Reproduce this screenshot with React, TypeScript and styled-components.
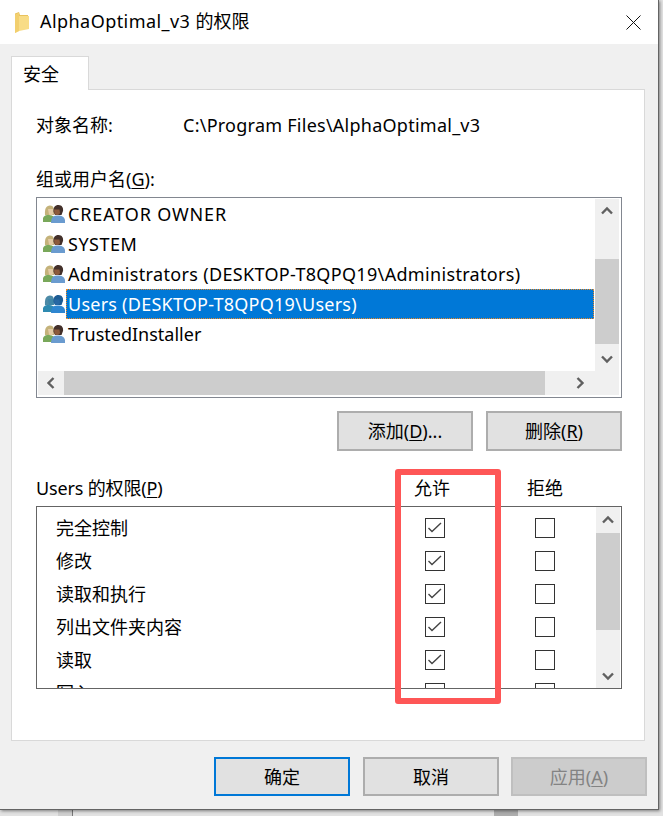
import { createGlobalStyle, styled } from "styled-components";

const GlobalStyle = createGlobalStyle`
  html, body {
    margin: 0;
    padding: 0;
  }
  body {
    font-family: "Noto Sans", "Noto Sans CJK SC", sans-serif;
    font-size: 18px;
    line-height: 24px;
    color: #000;
  }
`;

const Page = styled.div`
  position: relative;
  width: 663px;
  height: 816px;
  overflow: hidden;
  background: linear-gradient(
    90deg,
    #e2e2e2 0 58px,
    #cfcfcf 58px 72px,
    #777 72px 73px,
    #e2e2e2 73px 494px,
    #adadad 494px 518px,
    #e2e2e2 518px
  );
`;

const Window = styled.div`
  width: 659px;
  height: 810px;
  box-sizing: border-box;
  background: #f0f0f0;
  border-right: 1px solid #646464;
  border-bottom: 1px solid #646464;
  box-shadow: 1px 1px 3px rgba(0, 0, 0, 0.45);
`;

const TitleBar = styled.header`
  height: 44px;
  display: flex;
  align-items: center;
  padding: 0 17px 0 15px;
  background: #fff;
`;

const TitleText = styled.h1`
  flex: 1;
  margin: 0 0 2px 11px;
  font-size: 18px;
  font-weight: 400;
  line-height: 24px;
`;

const Latin = styled.span<{ $tracking: number }>`
  letter-spacing: ${(p) => p.$tracking}px;
`;

const TabStrip = styled.div`
  display: flex;
  margin: 12px 0 0 11px;
  height: 33px;
`;

const Tab = styled.div`
  width: 78px;
  box-sizing: border-box;
  height: 34px;
  padding: 5px 0 0 11px;
  background: #fff;
  border: 1px solid #d9d9d9;
  border-bottom: none;
  position: relative;
  z-index: 1;
`;

const Panel = styled.section`
  width: 634px;
  height: 652px;
  box-sizing: border-box;
  margin-left: 11px;
  padding: 23px 0 0 24px;
  background: #fff;
  border: 1px solid #d9d9d9;
`;

const ObjectRow = styled.div`
  display: grid;
  grid-template-columns: 147px 1fr;
  height: 24px;
`;

const SectionLabel = styled.div`
  height: 24px;
  margin-top: 30px;
`;

const Key = styled.span`
  text-decoration: underline;
  text-underline-offset: 2px;
`;

const ListBox = styled.div<{ $top: number }>`
  width: 586px;
  box-sizing: border-box;
  margin-top: ${(p) => p.$top}px;
  border: 1px solid #828790;
  background: #fff;
`;

const UserListBox = styled(ListBox)`
  height: 201px;
  padding: 1px 2px 2px 1px;
  display: grid;
  grid-template-columns: 557px 24px;
  grid-template-rows: 172px 24px;
`;

const UserRows = styled.ul`
  margin: 0;
  padding: 0;
  list-style: none;
`;

const UserRow = styled.li`
  height: 30px;
  display: flex;
  align-items: center;
  padding-left: 5px;
`;

const UserName = styled.span<{ $selected?: boolean; $tracking: number }>`
  flex: 1;
  height: 30px;
  box-sizing: border-box;
  margin: 0 1px 0 1px;
  padding: 2px 0 0 2px;
  line-height: 26px;
  letter-spacing: ${(p) => p.$tracking}px;
  color: ${(p) => (p.$selected ? "#fff" : "#000")};
  background: ${(p) => (p.$selected ? "#0078d7" : "transparent")};
  outline: ${(p) => (p.$selected ? "1px dotted #f08a24" : "none")};
  outline-offset: -1px;
`;

const VScroll = styled.div<{ $up: number }>`
  display: grid;
  grid-template-rows: ${(p) => p.$up}px 1fr 24px;
  background: #f0f0f0;
`;

const ArrowCell = styled.div`
  display: flex;
  align-items: center;
  justify-content: center;
`;

const VThumb = styled.div<{ $offset: number; $size: number }>`
  margin-top: ${(p) => p.$offset}px;
  height: ${(p) => p.$size}px;
  background: #cdcdcd;
`;

const HScroll = styled.div`
  display: grid;
  grid-template-columns: 26px 481px 1fr;
  background: #f0f0f0;
`;

const HThumb = styled.div`
  background: #cdcdcd;
`;

const RightArrowCell = styled(ArrowCell)`
  justify-content: flex-end;
  padding-right: 9px;
`;

const Corner = styled.div`
  background: #f0f0f0;
`;

const ButtonRow = styled.div`
  display: flex;
  justify-content: flex-end;
  gap: 13px;
  width: 586px;
  margin-top: 13px;
`;

const WinButton = styled.button<{ $default?: boolean }>`
  width: 136px;
  height: 40px;
  padding: 0;
  font: inherit;
  color: #000;
  background: #e1e1e1;
  border: ${(p) => (p.$default ? "2px solid #0078d7" : "2px solid #adadad")};
  &:disabled {
    color: #838383;
    background: #ccc;
    border-color: #bfbfbf;
  }
`;

const PermHeader = styled.div`
  display: grid;
  grid-template-columns: 378px 113px 1fr;
  width: 586px;
  height: 24px;
  margin-top: 25px;
`;

const PermListBox = styled(ListBox)`
  height: 183px;
  padding-right: 1px;
  display: grid;
  grid-template-columns: 559px 24px;
  border-color: #646464;
`;

const PermRows = styled.div`
  height: 181px;
  padding-top: 4px;
  box-sizing: border-box;
  overflow: hidden;
`;

const PermRow = styled.div`
  display: grid;
  grid-template-columns: 369px 110px 20px;
  align-items: center;
  height: 33px;
  padding-left: 19px;
`;

const CheckBox = styled.span`
  display: block;
  width: 20px;
  height: 20px;
  box-sizing: border-box;
  border: 1px solid #333;
  background: #fff;
`;

const Footer = styled.footer`
  display: flex;
  justify-content: flex-end;
  gap: 13px;
  width: 647px;
  margin-top: 16px;
`;

const FooterButton = styled(WinButton)`
  height: 39px;
  &:last-child {
    margin-left: -1px;
  }
`;

const Highlight = styled.div`
  position: absolute;
  left: 395px;
  top: 469px;
  width: 106px;
  height: 235px;
  box-sizing: border-box;
  border: 6px solid #fe5656;
  border-radius: 3px;
  pointer-events: none;
`;

function FolderIcon() {
  return (
    <svg width="14" height="21" viewBox="0 0 14 21">
      <path d="M0 1.5 L4 0 L5 3 L13 3 L13 17 L0 17 Z" fill="#e9c25d" />
      <path d="M0 3 L0 21 L4 19 L14 17 L14 4 L4 4 L4 1 Z" fill="#f8dc86" />
      <path d="M0 3 L4 1 L4 19 L0 21 Z" fill="#f2cf6e" />
    </svg>
  );
}

function CloseIcon() {
  return (
    <svg width="15" height="15" viewBox="0 0 15 15">
      <path d="M0.5 0.5 L14.5 14.5 M14.5 0.5 L0.5 14.5" stroke="#111" strokeWidth="1" fill="none" />
    </svg>
  );
}

function UsersIcon({ selected }: { selected?: boolean }) {
  const hair = selected ? "#4d8aa6" : "#c4b27a";
  const skin = selected ? "#3f86a8" : "#e3cba6";
  const shirt = selected ? "#2f8ab0" : "#79a85a";
  const darkHead = selected ? "#1d5c94" : "#43302a";
  const darkSkin = selected ? "#2868a4" : "#8c5a3c";
  const blue = selected ? "#2f86d0" : "#6a9bcf";
  return (
    <svg width="22" height="18" viewBox="0 0 22 18" style={{ flexShrink: 0 }}>
      <path d="M0 17 L0 13 C1 10.5 3 10 6 10 C9 10 11 11 12 14 L12 17 Z" fill={shirt} />
      <path d="M2 10 C1.5 4 3 0.5 7 0.5 C10.5 0.5 11.5 3.5 11 10 Z" fill={hair} />
      <path d="M5 4 L10.5 4 L10.5 8 C10 10 7.5 11 6 9.5 Z" fill={skin} />
      <path d="M8 18 L8.5 14 C9.5 11 12 10.5 15 10.5 C18.5 10.5 21 11.5 22 15 L22 18 Z" fill={blue} />
      <path d="M10.5 7 C10 2.5 12 0 15.5 0 C19 0 20.5 3 20 6 L18.5 10 L12 10 Z" fill={darkHead} />
      <path d="M11 4.5 L16.5 4.5 L17 8 C16 10.5 13 10.5 11.5 9 Z" fill={darkSkin} />
    </svg>
  );
}

function Chevron({ dir }: { dir: "up" | "down" | "left" | "right" }) {
  const rotate = { up: 0, right: 90, down: 180, left: 270 }[dir];
  return (
    <svg width="12" height="12" viewBox="0 0 12 12" style={{ transform: `rotate(${rotate}deg)` }}>
      <path d="M1 8.5 L6 3.5 L11 8.5" stroke="#606060" strokeWidth="2.4" fill="none" />
    </svg>
  );
}

function CheckMark() {
  return (
    <svg width="18" height="18" viewBox="0 0 18 18" style={{ display: "block" }}>
      <path d="M2.5 9 L6 12.5 L15 4" stroke="#444" strokeWidth="1.4" fill="none" />
    </svg>
  );
}

const users = [
  { name: "CREATOR OWNER", tracking: 0.85 },
  { name: "SYSTEM", tracking: 0.5 },
  { name: "Administrators (DESKTOP-T8QPQ19\\Administrators)", tracking: 0.33 },
  { name: "Users (DESKTOP-T8QPQ19\\Users)", tracking: 0.24, selected: true },
  { name: "TrustedInstaller", tracking: 0 },
];

const permissions = [
  { name: "完全控制", allowed: true },
  { name: "修改", allowed: true },
  { name: "读取和执行", allowed: true },
  { name: "列出文件夹内容", allowed: true },
  { name: "读取", allowed: true },
  { name: "写入", allowed: false },
];

export default function App() {
  return (
    <Page>
      <GlobalStyle />
      <Window>
        <TitleBar>
          <FolderIcon />
          <TitleText>
            <Latin $tracking={0.44}>AlphaOptimal_v3 </Latin>的权限
          </TitleText>
          <CloseIcon />
        </TitleBar>
        <TabStrip>
          <Tab>安全</Tab>
        </TabStrip>
        <Panel>
          <ObjectRow>
            <span>对象名称:</span>
            <Latin $tracking={0.25}>C:\Program Files\AlphaOptimal_v3</Latin>
          </ObjectRow>
          <SectionLabel>
            组或用户名(<Key>G</Key>):
          </SectionLabel>
          <UserListBox $top={6}>
            <UserRows>
              {users.map((user) => (
                <UserRow key={user.name}>
                  <UsersIcon selected={user.selected} />
                  <UserName $selected={user.selected} $tracking={user.tracking}>
                    {user.name}
                  </UserName>
                </UserRow>
              ))}
            </UserRows>
            <VScroll $up={24}>
              <ArrowCell>
                <Chevron dir="up" />
              </ArrowCell>
              <div>
                <VThumb $offset={36} $size={85} />
              </div>
              <ArrowCell>
                <Chevron dir="down" />
              </ArrowCell>
            </VScroll>
            <HScroll>
              <ArrowCell>
                <Chevron dir="left" />
              </ArrowCell>
              <HThumb />
              <RightArrowCell>
                <Chevron dir="right" />
              </RightArrowCell>
            </HScroll>
            <Corner />
          </UserListBox>
          <ButtonRow>
            <WinButton>
              添加(<Key>D</Key>)...
            </WinButton>
            <WinButton>
              删除(<Key>R</Key>)
            </WinButton>
          </ButtonRow>
          <PermHeader>
            <Latin $tracking={-0.15}>
              Users 的权限(<Key>P</Key>)
            </Latin>
            <span>允许</span>
            <span>拒绝</span>
          </PermHeader>
          <PermListBox $top={6}>
            <PermRows>
              {permissions.map((perm) => (
                <PermRow key={perm.name}>
                  <span>{perm.name}</span>
                  <CheckBox>{perm.allowed && <CheckMark />}</CheckBox>
                  <CheckBox />
                </PermRow>
              ))}
            </PermRows>
            <VScroll $up={26}>
              <ArrowCell>
                <Chevron dir="up" />
              </ArrowCell>
              <div>
                <VThumb $offset={0} $size={97} />
              </div>
              <ArrowCell>
                <Chevron dir="down" />
              </ArrowCell>
            </VScroll>
          </PermListBox>
        </Panel>
        <Footer>
          <FooterButton $default>确定</FooterButton>
          <FooterButton>取消</FooterButton>
          <FooterButton disabled>
            应用(<Key>A</Key>)
          </FooterButton>
        </Footer>
      </Window>
      <Highlight />
    </Page>
  );
}
